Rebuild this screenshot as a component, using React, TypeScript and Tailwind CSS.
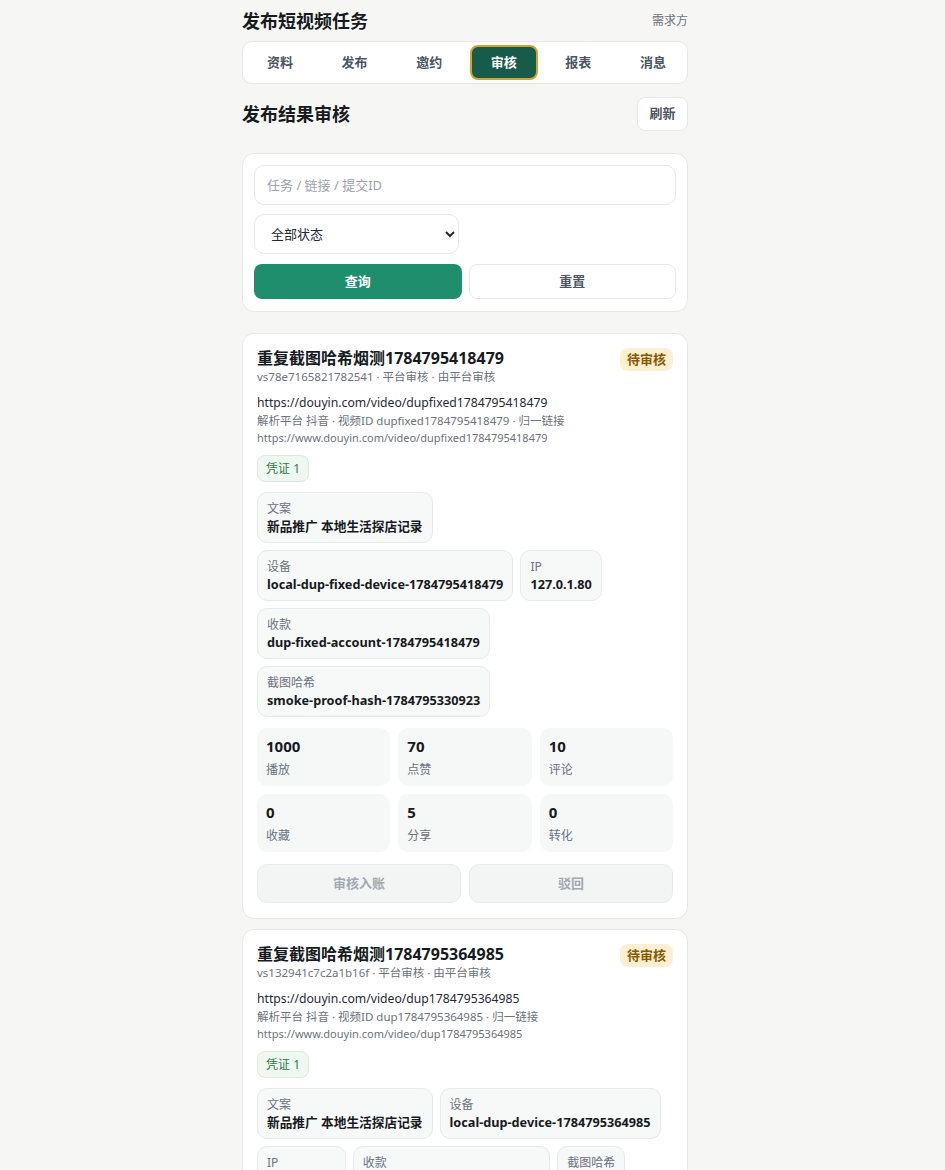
import React from 'react';

interface Field {
  label: string;
  value: string;
}

interface Submission {
  title: string;
  meta: string;
  url: string;
  parsed: string;
  normalized: string;
  proofs: number;
  fields: Field[];
  stats: { value: number; label: string }[];
}

const tabs = ['资料', '发布', '邀约', '审核', '报表', '消息'];

const defaultStats = [
  { value: 1000, label: '播放' },
  { value: 70, label: '点赞' },
  { value: 10, label: '评论' },
  { value: 0, label: '收藏' },
  { value: 5, label: '分享' },
  { value: 0, label: '转化' },
];

const submissions: Submission[] = [
  {
    title: '重复截图哈希烟测1784795418479',
    meta: 'vs78e7165821782541 · 平台审核 · 由平台审核',
    url: 'https://douyin.com/video/dupfixed1784795418479',
    parsed: '解析平台 抖音 · 视频ID dupfixed1784795418479 · 归一链接',
    normalized: 'https://www.douyin.com/video/dupfixed1784795418479',
    proofs: 1,
    fields: [
      { label: '文案', value: '新品推广 本地生活探店记录' },
      { label: '设备', value: 'local-dup-fixed-device-1784795418479' },
      { label: 'IP', value: '127.0.1.80' },
      { label: '收款', value: 'dup-fixed-account-1784795418479' },
      { label: '截图哈希', value: 'smoke-proof-hash-1784795330923' },
    ],
    stats: defaultStats,
  },
  {
    title: '重复截图哈希烟测1784795364985',
    meta: 'vs132941c7c2a1b16f · 平台审核 · 由平台审核',
    url: 'https://douyin.com/video/dup1784795364985',
    parsed: '解析平台 抖音 · 视频ID dup1784795364985 · 归一链接',
    normalized: 'https://www.douyin.com/video/dup1784795364985',
    proofs: 1,
    fields: [
      { label: '文案', value: '新品推广 本地生活探店记录' },
      { label: '设备', value: 'local-dup-device-1784795364985' },
      { label: 'IP', value: '127.0.1.100' },
      { label: '收款', value: 'dup-account-1784795364985' },
      { label: '截图哈希', value: '-' },
    ],
    stats: defaultStats,
  },
  {
    title: '短视频发布烟测1784795301127',
    meta: 'vs5d0c2e9a41f7b3c8 · 平台审核 · 由平台审核',
    url: 'https://douyin.com/video/smoke1784795301127',
    parsed: '解析平台 抖音 · 视频ID smoke1784795301127 · 归一链接',
    normalized: 'https://www.douyin.com/video/smoke1784795301127',
    proofs: 1,
    fields: [
      { label: '文案', value: '新品推广 本地生活探店记录' },
      { label: '设备', value: 'local-smoke-device-1784795301127' },
      { label: 'IP', value: '127.0.1.78' },
      { label: '收款', value: 'smoke-account-1784795301127' },
      { label: '截图哈希', value: 'smoke-proof-hash-1784795330923' },
    ],
    stats: defaultStats,
  },
];

const SubmissionCard = ({ item }: { item: Submission }) => (
  <div className="bg-white border border-[#e6e8e6] rounded-[12px] px-[14px] pt-[13px] pb-[15px]">
    <div className="flex justify-between items-start">
      <div>
        <h3 className="text-[16px] leading-[22px] font-bold text-[#161b22]">{item.title}</h3>
        <p className="text-[11.5px] leading-[16px] text-[#6b7280]">{item.meta}</p>
      </div>
      <span className="mt-[1px] px-[7px] h-[23px] flex items-center rounded-[8px] bg-[#fdf0d2] text-[#8a5800] text-[13px] font-bold">
        待审核
      </span>
    </div>

    <div className="mt-[9px]">
      <p className="text-[12.2px] leading-[18px] text-[#1f2937]">{item.url}</p>
      <p className="text-[11.5px] leading-[17px] text-[#6b7280]">{item.parsed}</p>
      <p className="text-[11px] leading-[17px] text-[#6b7280]">{item.normalized}</p>
    </div>

    <span className="mt-[9px] inline-flex items-center h-[27px] px-[8px] rounded-[8px] border border-[#dbeade] bg-[#eff7f1] text-[12px] text-[#2e7a4b]">
      凭证 {item.proofs}
    </span>

    <div className="mt-[10px] flex flex-wrap gap-[7px]">
      {item.fields.map((f) => (
        <div
          key={f.label}
          className="bg-[#f7f8f8] border border-[#e8eaea] rounded-[10px] px-[9px] pt-[7px] pb-[7px] max-w-full"
        >
          <div className="text-[12px] leading-[17px] text-[#6b7280]">{f.label}</div>
          <div className="text-[12.7px] leading-[18px] font-bold text-[#161b22] break-all">{f.value}</div>
        </div>
      ))}
    </div>

    <div className="mt-[11px] grid grid-cols-3 gap-[8px]">
      {item.stats.map((s) => (
        <div key={s.label} className="bg-[#f6f7f7] rounded-[10px] px-[9px] pt-[8px] h-[58px]">
          <div className="text-[15px] leading-[20px] font-bold text-[#161b22]">{s.value}</div>
          <div className="mt-[5px] text-[12px] leading-[17px] text-[#6b7280]">{s.label}</div>
        </div>
      ))}
    </div>

    <div className="mt-[12px] grid grid-cols-2 gap-[8px]">
      <button className="h-[39px] rounded-[10px] bg-[#f3f4f4] border border-[#e9ebeb] text-[13px] font-bold text-[#a3a8b0]">
        审核入账
      </button>
      <button className="h-[39px] rounded-[10px] bg-[#f3f4f4] border border-[#e9ebeb] text-[13px] font-bold text-[#a3a8b0]">
        驳回
      </button>
    </div>
  </div>
);

export default function App() {
  return (
    <div className="h-screen overflow-y-scroll pr-[15px] bg-[#f6f6f4] font-['Noto_Sans','Noto_Sans_CJK_SC',sans-serif] text-[#161b22]">
      <div className="w-[446px] mx-auto pt-[10px] pb-10">
        <div className="flex justify-between items-center h-[22px]">
          <h1 className="text-[18px] font-bold text-[#161b22]">发布短视频任务</h1>
          <span className="text-[12px] text-[#6b7280]">需求方</span>
        </div>

        <nav className="mt-[9px] h-[43px] bg-white border border-[#e6e8e6] rounded-[10px] pl-[3px] flex items-center gap-[6.6px] overflow-hidden">
          {tabs.map((t) => (
            <button
              key={t}
              className={
                t === '审核'
                  ? 'shrink-0 w-[68px] h-[35px] rounded-[8px] bg-[#175c4b] border-2 border-[#d6a227] text-white text-[13px] font-bold'
                  : 'shrink-0 w-[68px] h-[35px] rounded-[8px] text-[#4b5563] text-[13px] font-semibold'
              }
            >
              {t}
            </button>
          ))}
        </nav>

        <div className="mt-[13px] flex justify-between items-center">
          <h2 className="text-[18px] font-bold text-[#161b22]">发布结果审核</h2>
          <button className="w-[51px] h-[34px] rounded-[8px] bg-white border border-[#e6e8e6] text-[13px] font-bold text-[#4b5563]">
            刷新
          </button>
        </div>

        <div className="mt-[22px] bg-white border border-[#e6e8e6] rounded-[12px] px-[11px] pt-[11px] pb-[12px]">
          <input
            placeholder="任务 / 链接 / 提交ID"
            className="w-full h-[40px] rounded-[10px] border border-[#e5e7eb] px-3 text-[13px] placeholder:text-[#9ca3af] outline-none"
          />
          <select className="mt-[9px] w-[205px] h-[40px] rounded-[10px] border border-[#e5e7eb] bg-white px-3 text-[13px] text-[#1f2937]">
            <option>全部状态</option>
            <option>待审核</option>
            <option>已入账</option>
            <option>已驳回</option>
          </select>
          <div className="mt-[10px] grid grid-cols-2 gap-[7px]">
            <button className="h-[35px] rounded-[8px] bg-[#1f8e6d] text-white text-[13px] font-bold">查询</button>
            <button className="h-[35px] rounded-[8px] bg-white border border-[#e6e8e6] text-[13px] font-semibold text-[#4b5563]">
              重置
            </button>
          </div>
        </div>

        <div className="mt-[21px] flex flex-col gap-[10px]">
          {submissions.map((s) => (
            <SubmissionCard key={s.title} item={s} />
          ))}
        </div>
      </div>
    </div>
  );
}
